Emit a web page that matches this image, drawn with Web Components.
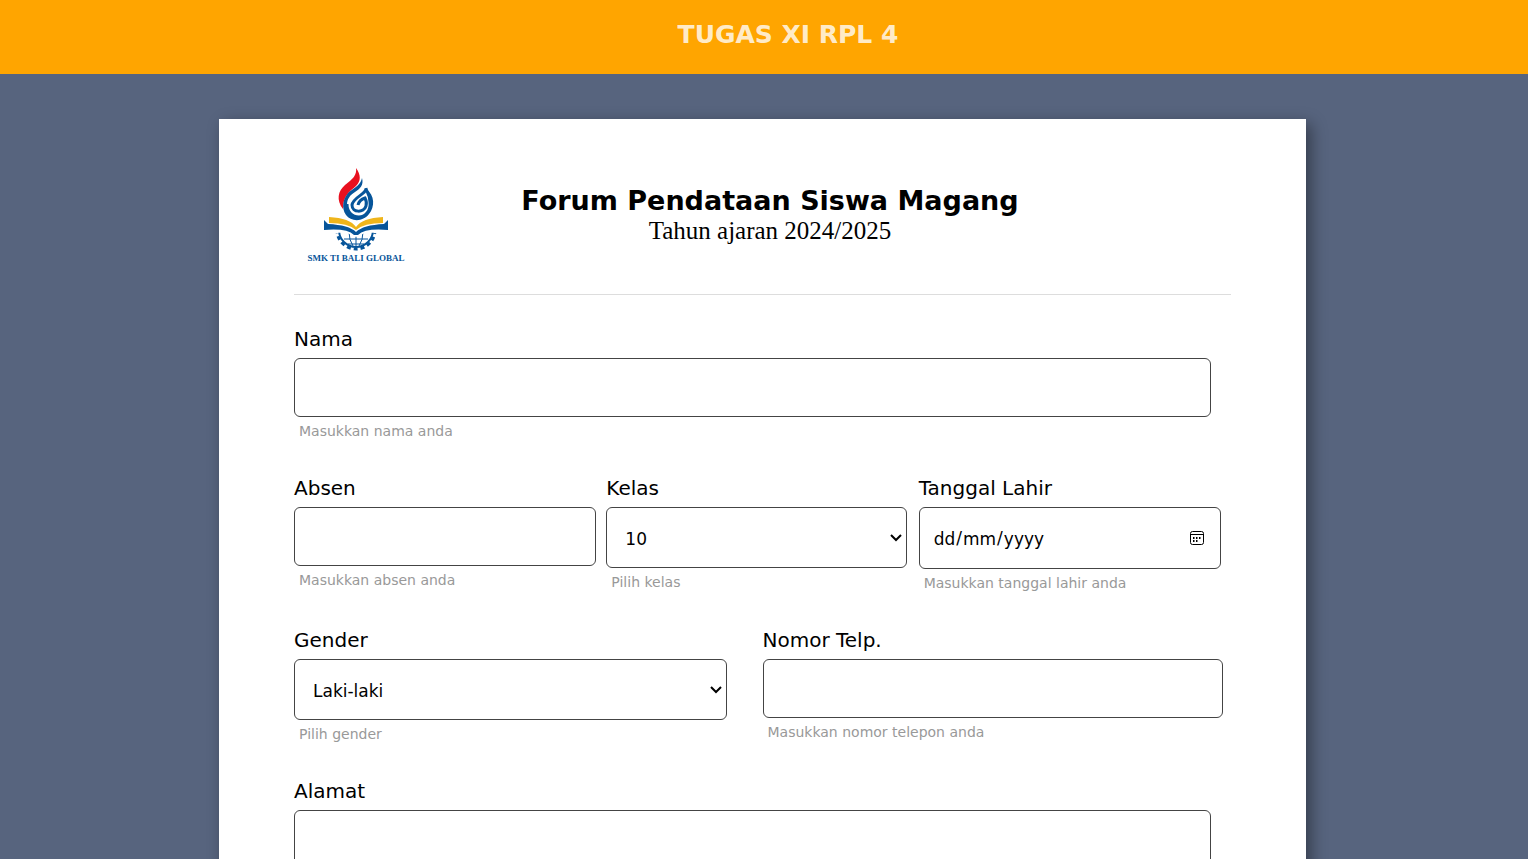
<!DOCTYPE html>
<html lang="id">
<head>
<meta charset="utf-8">
<meta name="viewport" content="width=device-width, initial-scale=1">
<title>Forum Pendataan Siswa Magang</title>
<style>
  body { margin: 0; background: #57647e; color: #000; font-family: Verdana, "DejaVu Sans", sans-serif; }
  form { margin: 0; display: grid; gap: 35px; }
</style>
</head>
<body>
<top-banner>TUGAS XI RPL 4</top-banner>
<form-card>
  <form-heading slot="heading">
    <school-logo slot="logo"></school-logo>
    Forum Pendataan Siswa Magang
    <span slot="sub">Tahun ajaran 2024/2025</span>
  </form-heading>
  <form>
    <form-row>
      <form-field label="Nama" type="text" hint="Masukkan nama anda" class="full"></form-field>
    </form-row>
    <form-row>
      <form-field label="Absen" type="text" hint="Masukkan absen anda"></form-field>
      <form-field label="Kelas" type="select" options="10,11,12" hint="Pilih kelas" class="medium"></form-field>
      <form-field label="Tanggal Lahir" type="date" hint="Masukkan tanggal lahir anda"></form-field>
    </form-row>
    <form-row>
      <form-field label="Gender" type="select" options="Laki-laki,Perempuan" hint="Pilih gender" class="short"></form-field>
      <form-field label="Nomor Telp." type="tel" hint="Masukkan nomor telepon anda" class="wide"></form-field>
    </form-row>
    <form-row>
      <form-field label="Alamat" type="textarea" hint="Masukkan alamat anda" class="full"></form-field>
    </form-row>
  </form>
</form-card>

<script>
const define = (name, html, setup) => customElements.define(name, class extends HTMLElement {
  constructor() {
    super();
    this.attachShadow({ mode: 'open' }).innerHTML = html;
  }
  connectedCallback() { if (setup) setup(this, this.shadowRoot); }
});

define('top-banner', `
  <style>
    :host { display: block; background: #ffa500; padding: 20px 0 24px 48px; }
    h1 { margin: 0; font-size: 25px; line-height: 30px; text-align: center; color: rgba(255,255,255,.8); }
  </style>
  <h1><slot></slot></h1>`);

define('form-card', `
  <style>
    :host { display: block; margin: 45px 222px 45px 219px; padding: 40px 75px; background: #fff;
            box-shadow: 5px 5px 15px rgba(0,0,0,.4); }
  </style>
  <slot name="heading"></slot><slot></slot>`);

define('form-heading', `
  <style>
    :host { display: grid; grid-template-columns: 125px 1fr 110px; align-items: center;
            height: 135px; border-bottom: 1px solid #ddd; margin-bottom: 32px; }
    .text { text-align: center; padding-bottom: 24px; }
    .logo { padding: 8px 0 0 12px; align-self: start; }
    h2 { margin: 0; font-size: 27px; line-height: 32px; }
    p { margin: 0; font: 25px/28px "Times New Roman", "Liberation Serif", serif; }
  </style>
  <div class="logo"><slot name="logo"></slot></div>
  <div class="text"><h2><slot></slot></h2><p><slot name="sub"></slot></p></div>`);

define('school-logo', `
  <style>:host { display: block; } svg { display: block; }</style>
  <svg width="100" height="100" viewBox="306 167 100 100" role="img" aria-label="SMK TI Bali Global">
    <defs><clipPath id="lower"><path d="M330 234L345 232L356 237L367 232L382 234V252H330Z"/></clipPath></defs>
    <path d="M356 168C361 175 361 181 356 186C349 192 343 196 343 209C336 200 338 191 345 185C353 179 357 175 356 168Z" fill="#e8101f"/>
    <path d="M362 178C364 185 360 189 355 192C350 195 347 199 347 205C347 212 352 217 359 216C366 216 370 210 370 203C370 198 369 195 366 189C375 195 375 207 369 214C363 222 351 222 346 215C341 208 343 198 349 192C356 187 361 184 362 178Z" fill="#07559a"/>
    <path d="M366 188C367 194 353 197 352 205C352 213 364 213 366 206C367 203 366 200 365 198C362 199 359 201 358 205" fill="none" stroke="#07559a" stroke-width="3"/>
    <path d="M347 204C347 212 352 217 359 217C366 217 371 210 370 202C370 195 367 192 366 189" fill="none" stroke="#07559a" stroke-width="3"/>
    <g clip-path="url(#lower)" fill="none" stroke="#07559a">
      <circle cx="356" cy="230" r="19" stroke-width="3" stroke-dasharray="4 3"/>
      <circle cx="356" cy="230" r="17" stroke-width="2"/>
      <path d="M344 239H368M348 244H364M356 232V247M349 232Q349 240 353 246M363 232Q363 240 359 246"/>
    </g>
    <path d="M329 217Q350 218 356 227Q362 218 383 217V223Q364 223 356 230Q348 223 329 223Z" fill="#efb51b"/>
    <path d="M324 220L328 224Q349 225 356 232Q363 225 384 224L388 220V230Q365 228 358 235H354Q347 228 324 230Z" fill="#07559a"/>
    <text x="356" y="261" text-anchor="middle" font-family="Liberation Serif, serif" font-weight="bold" font-size="9" fill="#07559a">SMK TI BALI GLOBAL</text>
  </svg>`);

define('form-row', `
  <style>:host { display: grid; grid-auto-flow: column; grid-auto-columns: minmax(0, 1fr); align-items: start; }</style>
  <slot></slot>`);

define('form-field', `
  <style>
    :host { display: block; padding-right: 10px; }
    :host(.full) { padding-right: 20px; }
    :host(.medium) { padding-right: 12px; }
    :host(.wide) { padding-right: 8px; }
    :host(.short) { padding-right: 36px; }
    label { display: block; font-size: 20px; line-height: 24px; margin-bottom: 7px; }
    input, select, textarea { display: block; box-sizing: border-box; width: 100%; height: 59px; margin: 0;
      border: 1px solid #444; border-radius: 6px; background: #fff; color: #000;
      font-family: inherit; font-size: 17px; padding: 0 13px; }
    select { height: 61px; padding: 2px 24px 0 18px; appearance: none;
      background: #fff url("data:image/svg+xml,%3Csvg xmlns='http://www.w3.org/2000/svg' width='12' height='8'%3E%3Cpath d='M1 1L6 6L11 1' fill='none' stroke='black' stroke-width='2'/%3E%3C/svg%3E") no-repeat right 4px center; }
    input[type=date] { height: 62px; padding-top: 2px; }
    /* day / month / year, with the two separators falling into the free columns */
    ::-webkit-datetime-edit-fields-wrapper { display: inline-grid; grid-template-rows: auto; }
    ::-webkit-datetime-edit-day-field { grid-area: 1 / 1; }
    ::-webkit-datetime-edit-month-field { grid-area: 1 / 3; }
    ::-webkit-datetime-edit-year-field { grid-area: 1 / 5; }
    ::-webkit-datetime-edit-text { grid-row: 1; }
    ::-webkit-calendar-picker-indicator { width: 16px; height: 16px; margin-right: 2px; padding: 0 0 2px;
      background: url("data:image/svg+xml,%3Csvg xmlns='http://www.w3.org/2000/svg' width='16' height='16' fill='none' stroke='black'%3E%3Crect x='1.5' y='1.5' width='13' height='13' rx='2'/%3E%3Cpath d='M2 4.5H14'/%3E%3Cpath d='M7 8H9M10 8H12M4 8H6M4 11H6M7 11H9' stroke-width='2' stroke-dasharray='1.5 1'/%3E%3C/svg%3E") no-repeat top; }
    textarea { height: 120px; padding: 14px; resize: none; }
    small { display: block; margin: 4px 0 0 5px; font-size: 14px; line-height: 20px; color: #999; }
  </style>
  <label for="control"></label><div id="box"></div><small id="hint"></small>`, (host, root) => {
  const type = host.getAttribute('type');
  const control = document.createElement(type === 'select' || type === 'textarea' ? type : 'input');
  if (control.localName === 'input') control.type = type;
  if (type === 'select') host.getAttribute('options').split(',').forEach(o => control.add(new Option(o)));
  control.id = 'control';
  control.setAttribute('aria-describedby', 'hint');
  root.querySelector('label').textContent = host.getAttribute('label');
  root.querySelector('small').textContent = host.getAttribute('hint');
  root.getElementById('box').replaceChildren(control);
});
</script>
</body>
</html>
